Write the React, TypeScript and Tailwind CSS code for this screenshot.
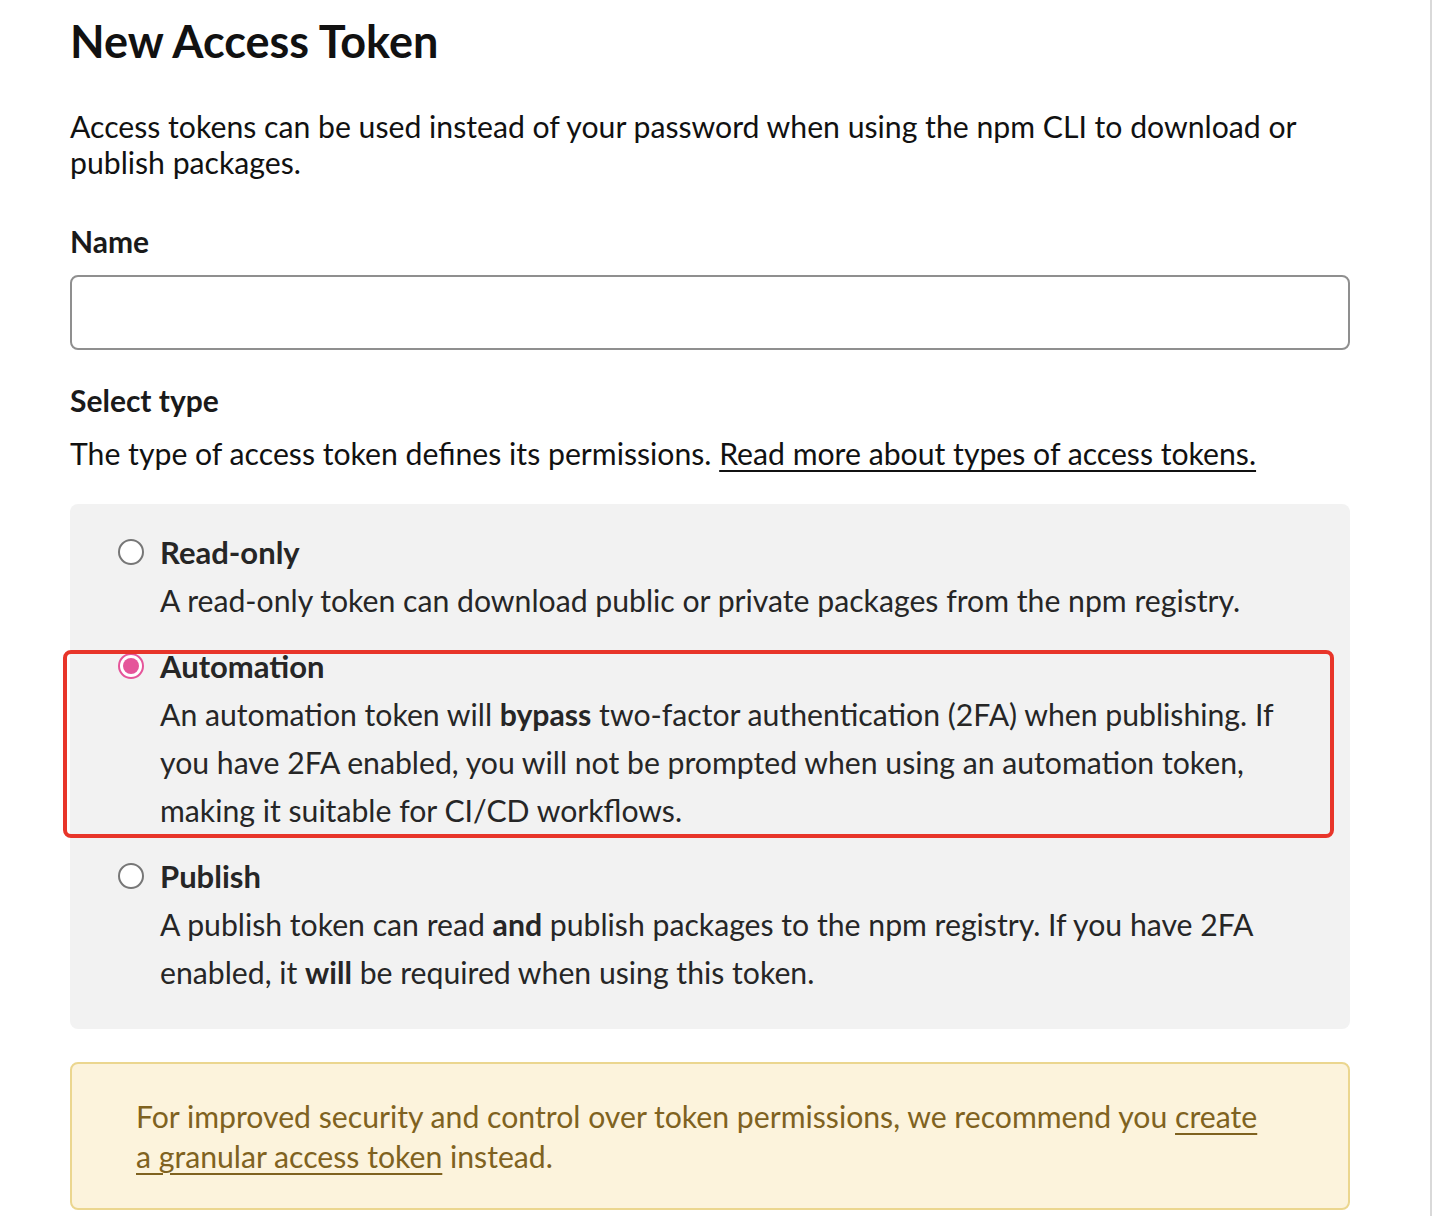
export default function App() {
  return (
    <div className="min-h-screen bg-white flex font-['Lato','Noto_Sans',sans-serif]">
      <div className="w-[1430px] px-[70px]">
        <div className="w-[1280px]">
          <h1 className="mt-[11px] text-[45px] leading-[60px] font-bold text-[#111]">New Access Token</h1>

          <p className="mt-[37px] text-[30.2px] leading-[36px] text-[#111]">
            Access tokens can be used instead of your password when using the npm CLI to download or publish packages.
          </p>

          <label className="block mt-[43px] text-[30px] leading-[36px] font-bold text-[#1a1a1a]">Name</label>
          <input
            type="text"
            className="block mt-[16px] w-full h-[75px] rounded-[8px] border-2 border-[#8f8f8f] bg-white px-4 outline-none"
          />

          <h2 className="mt-[32px] text-[30px] leading-[36px] font-bold text-[#1a1a1a]">Select type</h2>
          <p className="mt-[17px] text-[30.2px] leading-[36px] text-[#111]">
            The type of access token defines its permissions.{" "}
            <a className="underline underline-offset-[5px] decoration-2">Read more about types of access tokens.</a>
          </p>

          <div className="relative mt-[33px] rounded-[8px] bg-[#f2f2f2] pl-[48px] pr-[40px] pt-[24px] pb-[33px] text-[30.2px] leading-[48px] text-[#262626]">
            <div className="flex gap-[16px]">
              <span className="mt-[11px] w-[26px] h-[26px] shrink-0 rounded-full border-2 border-[#777] bg-white" />
              <div>
                <div className="font-bold text-[31px]">Read-only</div>
                <div>A read-only token can download public or private packages from the npm registry.</div>
              </div>
            </div>

            <div className="flex gap-[16px] mt-[18px]">
              <span className="mt-[11px] w-[26px] h-[26px] shrink-0 rounded-full border-2 border-[#e5559a] bg-white flex items-center justify-center">
                <span className="w-[16px] h-[16px] rounded-full bg-[#e5559a]" />
              </span>
              <div>
                <div className="font-bold text-[31px]">Automation</div>
                <div>
                  An automation token will <b>bypass</b> two-factor authentication (2FA) when publishing. If you have 2FA enabled, you will not be prompted when using an automation token, making it suitable for CI/CD workflows.
                </div>
              </div>
            </div>

            <div className="flex gap-[16px] mt-[18px]">
              <span className="mt-[11px] w-[26px] h-[26px] shrink-0 rounded-full border-2 border-[#777] bg-white" />
              <div>
                <div className="font-bold text-[31px]">Publish</div>
                <div>
                  A publish token can read <b>and</b> publish packages to the npm registry. If you have 2FA enabled, it <b>will</b> be required when using this token.
                </div>
              </div>
            </div>

            <div className="absolute left-[-7px] top-[146px] w-[1271px] h-[188px] rounded-[8px] border-4 border-[#e8352a] pointer-events-none" />
          </div>

          <div className="mt-[33px] rounded-[8px] border-2 border-[#ebd68f] bg-[#fcf3dc] pl-[64px] pr-[76px] pt-[32px] pb-[32px] text-[30.2px] leading-[40px] text-[#7f6220]">
            For improved security and control over token permissions, we recommend you{" "}
            <a className="underline underline-offset-[5px] decoration-2">create a granular access token</a> instead.
          </div>
        </div>
      </div>
      <div className="w-[2px] bg-[#d9d9d9]" />
    </div>
  );
}
